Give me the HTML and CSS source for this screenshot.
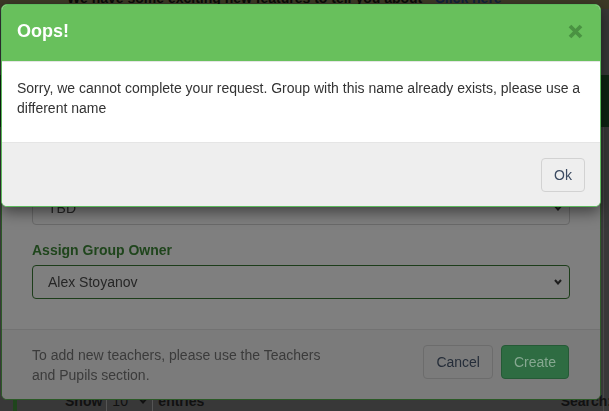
FILE: index.html
```html
<!DOCTYPE html>
<html lang="en">
<head>
<meta charset="utf-8">
<title>Oops!</title>
<link rel="stylesheet" href="styles.css">
</head>
<body>
<div class="page">
  <div class="banner"><span class="banner-text">We have some exciting new features to tell you about - <a class="banner-link">Click here</a></span></div>
  <div class="navbar"></div>
  <div class="panel">
    <div class="table-tools">
      <div class="length">Show <span class="length-select"><span>10</span><svg class="chev-small" viewBox="0 0 8 6" width="8" height="6"><polyline points="1,1 4,4.5 7,1" fill="none" stroke="#111" stroke-width="2"/></svg></span> entries</div>
      <div class="search">Search:</div>
    </div>
  </div>
</div>

<div class="modal modal-create">
  <div class="create-body">
    <div class="form-group">
      <div class="select"><span>TBD</span><svg class="chev" viewBox="0 0 8 6" width="8" height="6"><polyline points="1,1 4,4.5 7,1" fill="none" stroke="#1e1e1e" stroke-width="2"/></svg></div>
    </div>
    <div class="form-group">
      <div class="field-label">Assign Group Owner</div>
      <div class="select select-owner"><span>Alex Stoyanov</span><svg class="chev" viewBox="0 0 8 6" width="8" height="6"><polyline points="1,1 4,4.5 7,1" fill="none" stroke="#1e1e1e" stroke-width="2"/></svg></div>
    </div>
  </div>
  <div class="create-footer">
    <p class="hint">To add new teachers, please use the Teachers and Pupils section.</p>
    <div class="actions">
      <button class="btn btn-cancel">Cancel</button>
      <button class="btn btn-create">Create</button>
    </div>
  </div>
</div>

<div class="modal modal-alert">
  <div class="alert-header">
    <h4 class="alert-title">Oops!</h4>
    <svg class="close" viewBox="0 0 15 15" width="15" height="15"><path d="M2 2 L13 13 M13 2 L2 13" stroke="#4a9242" stroke-width="3.8" fill="none"/></svg>
  </div>
  <div class="alert-body">
    <p>Sorry, we cannot complete your request. Group with this name already exists, please use a different name</p>
  </div>
  <div class="alert-footer">
    <button class="btn btn-ok">Ok</button>
  </div>
</div>
</body>
</html>
```

FILE: styles.css
```css
* { box-sizing: border-box; }

html, body {
  margin: 0;
  height: 100%;
}

body {
  background: #383838;
  font-family: "Liberation Sans", Arial, sans-serif;
  font-size: 14px;
  line-height: 20px;
  color: #111;
  overflow: hidden;
}

.page {
  height: 411px;
  display: flex;
  flex-direction: column;
}

.banner {
  height: 9px;
  overflow: hidden;
  background: #3d3a27;
}

.banner-text {
  display: block;
  margin-top: -10px;
  padding-left: 67px;
  font-weight: bold;
  line-height: 16px;
  color: #0b0b08;
  white-space: nowrap;
}

.banner-link { color: #12223c; }

.navbar {
  height: 53px;
  margin-top: 66px;
  background: #0f2413;
}

.panel {
  flex: 1;
  margin-left: 13px;
  margin-right: 5px;
  border-left: 4px solid #1f451c;
  border-right: 1px solid #484848;
  padding: 264px 0 0 48px;
}

.table-tools {
  display: flex;
  justify-content: space-between;
  font-weight: bold;
  color: #111;
}

.length {
  display: flex;
  align-items: center;
}

.length-select {
  display: flex;
  align-items: center;
  justify-content: space-between;
  width: 47px;
  height: 20px;
  margin: 0 5px 0 4px;
  padding: 0 5px 0 5px;
  border-left: 1px solid #555;
  border-right: 1px solid #555;
  font-weight: normal;
}

.search { margin-right: -9px; }

/* modals */
.modal {
  position: fixed;
  left: 1px;
  width: 600px;
  border-radius: 6px;
  overflow: hidden;
}

.modal-create {
  bottom: 11px;
  background: #7f7f7f;
  border: 1px solid #2c5a27;
}

.create-body {
  padding: 15px 30px;
}

.form-group { margin-bottom: 15px; }

.field-label {
  margin-bottom: 5px;
  font-weight: bold;
  color: #1f451c;
}

.select {
  display: flex;
  align-items: center;
  justify-content: space-between;
  height: 34px;
  padding: 0 7px 0 15px;
  border: 1px solid #6a6a6a;
  border-radius: 4px;
  color: #262626;
}

.select-owner { border-color: #1d3d1a; }

.create-footer {
  display: flex;
  justify-content: space-between;
  align-items: flex-start;
  padding: 15px 31px 14px 30px;
  border-top: 1px solid #727272;
  background: #7b7b7b;
}

.hint {
  width: 300px;
  margin: 0;
  color: #3b3b3b;
}

.actions {
  display: flex;
  gap: 8px;
}

.btn {
  font-family: inherit;
  font-size: 14px;
  line-height: 20px;
  padding: 6px 12px;
  border-radius: 4px;
  border: 1px solid transparent;
  background: transparent;
}

.btn-cancel {
  border-color: #6c6c6c;
  color: #252d39;
}

.btn-create {
  background: #2e6c42;
  border-color: #255a36;
  color: #86a891;
}

.modal-alert {
  top: 4px;
  background: #fff;
  border: 1px solid #5cb85c;
  box-shadow: 0 5px 15px rgba(0, 0, 0, 0.5);
}

.alert-header {
  display: flex;
  justify-content: space-between;
  align-items: center;
  padding: 14px 17px 16px 15px;
  background: #68c05c;
  border-bottom: 1px solid #e5e5e5;
}

.alert-title {
  margin: 0;
  font-size: 18px;
  line-height: 25.7px;
  font-weight: bold;
  color: #fff;
}

.alert-body {
  padding: 16px 15px 15px;
  color: #333;
}

.alert-body p { margin: 0 0 9px; }

.alert-footer {
  display: flex;
  justify-content: flex-end;
  padding: 15px 15px 14px;
  background: #eeeeee;
  border-top: 1px solid #e5e5e5;
}

.btn-ok {
  background: #eeeeee;
  border-color: #d2d2d2;
  color: #3b4a61;
}
```
